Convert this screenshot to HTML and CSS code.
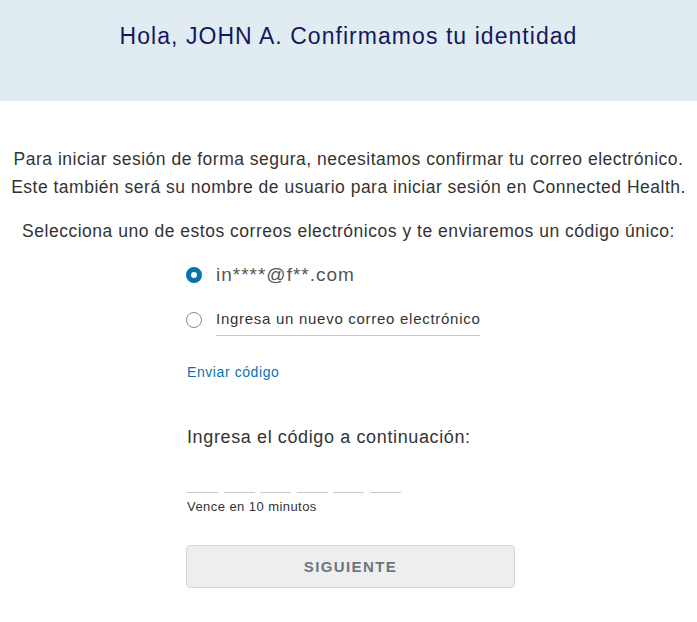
FILE: index.html
```html
<!DOCTYPE html>
<html lang="es">
<head>
<meta charset="utf-8">
<title>Confirmamos tu identidad</title>
<link rel="stylesheet" href="styles.css">
</head>
<body>
<header class="hero">
  <h1 class="hero-title">Hola, JOHN A. Confirmamos tu identidad</h1>
</header>
<main class="content">
  <p class="intro">Para iniciar sesión de forma segura, necesitamos confirmar tu correo electrónico.<br>Este también será su nombre de usuario para iniciar sesión en Connected Health.</p>
  <p class="select-text">Selecciona uno de estos correos electrónicos y te enviaremos un código único:</p>
  <form class="form">
    <label class="option">
      <span class="radio radio-checked"></span>
      <span class="email">in****@f**.com</span>
    </label>
    <label class="option">
      <span class="radio"></span>
      <span class="new-email">Ingresa un nuevo correo electrónico</span>
    </label>
    <a class="send-link" href="#">Enviar código</a>
    <div class="code-label">Ingresa el código a continuación:</div>
    <div class="code-boxes">
      <span class="code-box"></span><span class="code-box"></span><span class="code-box"></span><span class="code-box"></span><span class="code-box"></span><span class="code-box"></span>
    </div>
    <div class="expires">Vence en 10 minutos</div>
    <button type="button" class="next-btn">SIGUIENTE</button>
  </form>
</main>
</body>
</html>
```
FILE: styles.css
```css
html, body {
  margin: 0;
  padding: 0;
  background: #ffffff;
  font-family: "Liberation Sans", Arial, sans-serif;
  color: #333333;
}
.hero {
  background: #e1ecf2;
  height: 101px;
  box-sizing: border-box;
  padding-top: 22px;
}
.hero-title {
  margin: 0;
  text-align: center;
  font-size: 23px;
  font-weight: normal;
  line-height: 28px;
  letter-spacing: 1.05px;
  color: #15185c;
}
.content {
  display: flex;
  flex-direction: column;
  align-items: center;
  padding-top: 44px;
}
.intro {
  margin: 0;
  text-align: center;
  font-size: 17.5px;
  line-height: 28px;
  letter-spacing: 0.5px;
  color: #333333;
  white-space: nowrap;
}
.select-text {
  margin: 16px 0 0;
  text-align: center;
  font-size: 17.5px;
  line-height: 28px;
  letter-spacing: 0.52px;
  color: #333333;
  white-space: nowrap;
}
.form {
  width: 329px;
  margin-left: 4px;
  display: flex;
  flex-direction: column;
  padding-top: 15px;
}
.option {
  display: flex;
  align-items: center;
  gap: 14px;
  height: 30px;
}
.option + .option {
  margin-top: 15px;
}
.radio {
  width: 16px;
  height: 16px;
  box-sizing: border-box;
  border-radius: 50%;
  border: 1px solid #8a8a8a;
  flex: none;
  background: #fff;
}
.radio-checked {
  border: 5.5px solid #0a72ad;
  background: #fff;
}
.email {
  font-size: 19px;
  letter-spacing: 1px;
  color: #555555;
}
.new-email {
  font-size: 15px;
  letter-spacing: 0.72px;
  color: #333333;
  border-bottom: 1px solid #c8c8c8;
  padding: 6px 0 8px;
  width: 264px;
  white-space: nowrap;
}
.send-link {
  margin-top: 28px;
  font-size: 14px;
  letter-spacing: 0.58px;
  color: #0a72ad;
  text-decoration: none;
  line-height: 18px;
  padding-left: 1px;
  align-self: flex-start;
}
.code-label {
  margin-top: 44px;
  font-size: 18px;
  line-height: 24px;
  letter-spacing: 0.62px;
  color: #333333;
  padding-left: 1px;
}
.code-boxes {
  display: flex;
  gap: 5.6px;
  margin-top: 43px;
  padding-left: 1px;
}
.code-box {
  width: 31px;
  height: 1px;
  background: #c8c8c8;
}
.expires {
  margin-top: 6px;
  font-size: 13px;
  line-height: 16px;
  letter-spacing: 0.44px;
  color: #333333;
  padding-left: 1px;
}
.next-btn {
  margin-top: 30px;
  height: 43px;
  width: 329px;
  background: #eeeeee;
  border: 1px solid #d8d8d8;
  border-radius: 4px;
  font-family: "Liberation Sans", Arial, sans-serif;
  font-size: 15px;
  font-weight: bold;
  letter-spacing: 1.4px;
  color: #6c7680;
}
```
